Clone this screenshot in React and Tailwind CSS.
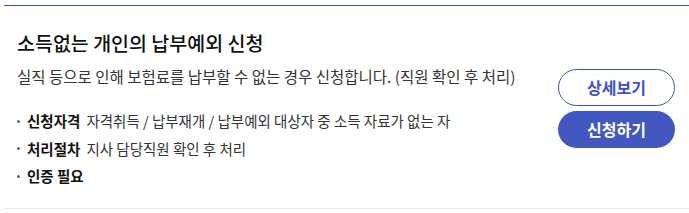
import React from "react";

const items = [
  { label: "신청자격", text: "자격취득 / 납부재개 / 납부예외 대상자 중 소득 자료가 없는 자" },
  { label: "처리절차", text: "지사 담당직원 확인 후 처리" },
  { label: "인증 필요", text: "" },
];

export default function App() {
  return (
    <div
      className="w-[689px] h-[213px] bg-white pt-[5px] pl-1 overflow-hidden"
      style={{ fontFamily: '"Noto Sans CJK KR", "Noto Sans", sans-serif' }}
    >
      <div className="h-px bg-[#3b50cc]" />
      <div className="flex items-center justify-between border-b border-[#e6e6e6] pl-[13px] pr-[14px] h-[203px]">
        <div className="flex flex-col self-start pt-[24px]">
          <h2 className="text-[19.5px] leading-[26px] font-medium text-[#111]">
            소득없는 개인의 납부예외 신청
          </h2>
          <p className="mt-[9px] text-[15.5px] leading-[22px] text-[#333]">
            실직 등으로 인해 보험료를 납부할 수 없는 경우 신청합니다. (직원 확인 후 처리)
          </p>
          <ul className="mt-[23px] flex flex-col gap-[5.5px]">
            {items.map((item) => (
              <li key={item.label} className="flex items-center text-[14.5px] leading-[22px] text-[#333]">
                <span className="w-[3px] h-[3px] rounded-full bg-[#666] mr-[7px]" />
                <span className="font-bold text-[#111] mr-[6px]">{item.label}</span>
                {item.text && <span>{item.text}</span>}
              </li>
            ))}
          </ul>
        </div>
        <div className="flex flex-col gap-[5px] mt-[2px]">
          <button className="w-[117px] h-[37px] rounded-full border border-[#3f51c4] bg-white text-[#3f51c4] text-[16px] font-bold">
            상세보기
          </button>
          <button className="w-[117px] h-[37px] rounded-full bg-[#4258c0] text-white text-[16px] font-bold">
            신청하기
          </button>
        </div>
      </div>
    </div>
  );
}
